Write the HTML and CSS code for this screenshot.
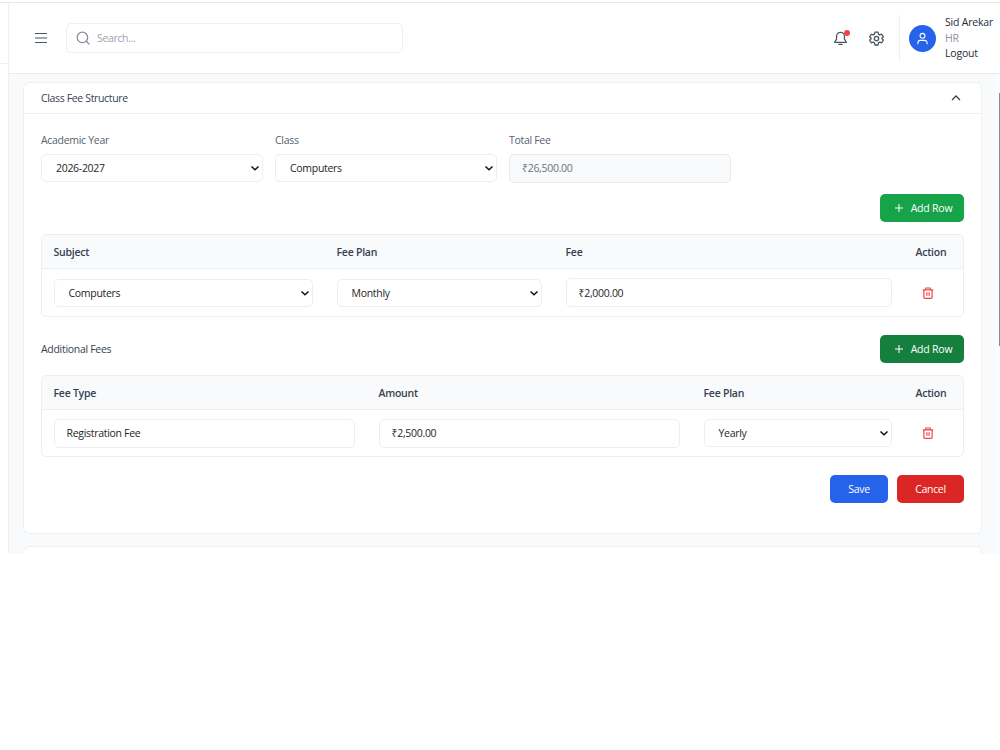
FILE: index.html
```html
<!DOCTYPE html>
<html lang="en">
<head>
  <meta charset="UTF-8">
  <title>Class Fee Structure</title>
  <link rel="stylesheet" href="styles.css">
</head>
<body>
  <div class="app">
    <aside class="sidebar">
      <div class="sidebar-logo"></div>
    </aside>

    <div class="main">
      <header class="topbar">
        <button class="icon-btn menu-btn" aria-label="Menu">
          <svg viewBox="0 0 14 14" fill="none" stroke="currentColor" stroke-width="1.2">
            <path d="M1 2.500h12M1 7h12M1 11.500h12"/>
          </svg>
        </button>
        <div class="search">
          <svg viewBox="0 0 24 24" fill="none" stroke="currentColor" stroke-width="2.200" stroke-linecap="round">
            <circle cx="11" cy="11" r="9"/>
            <path d="M17.700 17.700L22.500 22.500"/>
          </svg>
          <span>Search...</span>
        </div>
        <div class="topbar-right">
          <button class="icon-btn bell" aria-label="Notifications">
            <svg viewBox="0 0 24 24" fill="none" stroke="currentColor" stroke-width="2" stroke-linecap="round" stroke-linejoin="round">
              <path d="M12 2a6.300 6.300 0 0 0-6.300 6.300v4.700L2.500 18h19l-3.200-5V8.300A6.300 6.300 0 0 0 12 2z"/>
              <path d="M9.500 21.500h5"/>
            </svg>
            <i class="dot"></i>
          </button>
          <button class="icon-btn gear" aria-label="Settings">
            <svg viewBox="1 1 22 22" fill="none" stroke="currentColor" stroke-width="1.900" stroke-linejoin="round">
              <path d="M9.700 2.500h4.600l.7 3.100 1.700 1 3-.9 2.300 4-2.300 2.100v.4l2.300 2.100-2.300 4-3-.9-1.700 1-.7 3.100H9.700L9 18.400l-1.700-1-3 .9-2.300-4 2.300-2.100v-.4L2 9.700l2.300-4 3 .9 1.700-1z"/>
              <circle cx="12" cy="12" r="3.200"/>
            </svg>
          </button>
          <div class="user">
            <div class="avatar">
              <svg viewBox="0 0 24 24" fill="none" stroke="currentColor" stroke-width="2" stroke-linecap="round" stroke-linejoin="round">
                <circle cx="12" cy="7" r="4.500"/>
                <path d="M3.500 21.500v-1.500a4.500 4.500 0 0 1 4.500-4.500h8a4.500 4.500 0 0 1 4.500 4.500v1.500"/>
              </svg>
            </div>
            <div class="user-info">
              <div>Sid Arekar</div>
              <div class="role">HR</div>
              <div>Logout</div>
            </div>
          </div>
        </div>
      </header>

      <div class="content">
        <section class="card">
          <div class="card-header">
            <span>Class Fee Structure</span>
            <svg viewBox="0 0 12 12" fill="none" stroke="currentColor" stroke-width="1.300">
              <path d="M2 8l4-4 4 4"/>
            </svg>
          </div>

          <div class="card-body">
            <div class="fields">
              <label class="field">
                <span>Academic Year</span>
                <div class="select"><span>2026-2027</span><svg viewBox="0 0 10 8"><path d="M1.500 2.500L5 5.800l3.500-3.300"/></svg></div>
              </label>
              <label class="field">
                <span>Class</span>
                <div class="select"><span>Computers</span><svg viewBox="0 0 10 8"><path d="M1.500 2.500L5 5.800l3.500-3.300"/></svg></div>
              </label>
              <label class="field">
                <span>Total Fee</span>
                <div class="input disabled">₹26,500.00</div>
              </label>
            </div>

            <div class="toolbar">
              <button class="btn btn-add">
                <svg viewBox="0 0 10 10" fill="none" stroke="currentColor"><path d="M5 1v8M1 5h8"/></svg>
                <span>Add Row</span>
              </button>
            </div>

            <div class="table subjects">
              <div class="row head">
                <div>Subject</div>
                <div>Fee Plan</div>
                <div>Fee</div>
                <div>Action</div>
              </div>
              <div class="row">
                <div class="select"><span>Computers</span><svg viewBox="0 0 10 8"><path d="M1.500 2.500L5 5.800l3.500-3.300"/></svg></div>
                <div class="select"><span>Monthly</span><svg viewBox="0 0 10 8"><path d="M1.500 2.500L5 5.800l3.500-3.300"/></svg></div>
                <div class="input">₹2,000.00</div>
                <button class="icon-btn delete" aria-label="Delete">
                  <svg viewBox="0 0 12 12" fill="none" stroke="currentColor" stroke-width="1.200">
                    <path d="M.8 2.800h10.400M3.800 2.800V1h4.400v1.800M1.900 2.800v7.400q0 1.100 1.100 1.100h6q1.100 0 1.100-1.100V2.800M4.900 5.200v3.600M7.100 5.200v3.600"/>
                  </svg>
                </button>
              </div>
            </div>

            <div class="toolbar additional">
              <span>Additional Fees</span>
              <button class="btn btn-add active">
                <svg viewBox="0 0 10 10" fill="none" stroke="currentColor"><path d="M5 1v8M1 5h8"/></svg>
                <span>Add Row</span>
              </button>
            </div>

            <div class="table extras">
              <div class="row head">
                <div>Fee Type</div>
                <div>Amount</div>
                <div>Fee Plan</div>
                <div>Action</div>
              </div>
              <div class="row">
                <div class="input">Registration Fee</div>
                <div class="input">₹2,500.00</div>
                <div class="select"><span>Yearly</span><svg viewBox="0 0 10 8"><path d="M1.500 2.500L5 5.800l3.500-3.300"/></svg></div>
                <button class="icon-btn delete" aria-label="Delete">
                  <svg viewBox="0 0 12 12" fill="none" stroke="currentColor" stroke-width="1.200">
                    <path d="M.8 2.800h10.400M3.800 2.800V1h4.400v1.800M1.900 2.800v7.400q0 1.100 1.100 1.100h6q1.100 0 1.100-1.100V2.800M4.900 5.200v3.600M7.100 5.200v3.600"/>
                  </svg>
                </button>
              </div>
            </div>

            <div class="actions">
              <button class="btn btn-save">Save</button>
              <button class="btn btn-cancel">Cancel</button>
            </div>
          </div>
        </section>

        <section class="card next-card"></section>
        <div class="scrollbar"><div class="thumb"></div></div>
      </div>
    </div>
  </div>
</body>
</html>
```

FILE: styles.css
```css
* {
  box-sizing: border-box;
}
body {
  margin: 0;
  background: #fff;
  font-family: "Open Sans", "Noto Sans", sans-serif;
  font-size: 10.5px;
  letter-spacing: -0.3px;
  line-height: 16px;
  color: #374151;
}
button {
  font: inherit;
  letter-spacing: inherit;
  border: 0;
  padding: 0;
  background: none;
  cursor: pointer;
}
svg {
  display: block;
  flex: none;
}
.app {
  display: flex;
  height: 554px;
  padding-top: 2px;
  overflow: hidden;
}
.sidebar {
  width: 9px;
  border-top: 1px solid #e5e7eb;
  border-right: 1px solid #eef0f3;
}
.sidebar-logo {
  height: 61px;
  border-bottom: 1px solid #eef0f3;
}
.main {
  flex: 1;
  display: flex;
  flex-direction: column;
  min-width: 0;
}

/* top bar */
.topbar {
  flex: none;
  height: 72px;
  display: flex;
  align-items: center;
  border-top: 1px solid #e5e7eb;
  border-bottom: 1px solid #e9ebee;
  padding: 0 7px 0 25px;
}
.icon-btn {
  color: #4b5563;
}
.menu-btn svg {
  width: 14px;
  height: 14px;
}
.search {
  width: 337px;
  height: 30px;
  margin-left: 18px;
  padding: 0 10px 0 9px;
  display: flex;
  align-items: center;
  gap: 7px;
  border: 1px solid #eef0f3;
  border-radius: 5px;
  color: #9ca3af;
  letter-spacing: -0.35px;
}
.search svg {
  width: 14px;
  height: 14px;
  color: #858e9c;
}
.topbar-right {
  margin-left: auto;
  display: flex;
  align-items: center;
}
.bell {
  position: relative;
  margin-right: 21px;
}
.bell svg,
.gear svg {
  width: 15px;
  height: 15px;
}
.gear {
  margin-right: 15px;
}
.dot {
  position: absolute;
  top: -1px;
  right: -2px;
  width: 6px;
  height: 6px;
  border-radius: 50%;
  background: #ef4444;
}
.user {
  width: 94px;
  height: 47px;
  padding-left: 9px;
  display: flex;
  align-items: center;
  gap: 9px;
  border-left: 1px solid #eef0f3;
}
.avatar {
  flex: none;
  width: 27px;
  height: 27px;
  border-radius: 50%;
  background: #2563eb;
  color: #fff;
  display: flex;
  align-items: center;
  justify-content: center;
}
.avatar svg {
  width: 13px;
  height: 13px;
}
.user-info {
  padding-top: 1px;
  line-height: 15.4px;
  letter-spacing: -0.2px;
  color: #262d38;
  white-space: nowrap;
}
.user-info .role {
  color: #8b93a0;
}

/* content */
.content {
  flex: 1;
  position: relative;
  padding: 8px 18px 0 14px;
  background: #f9fafb;
  overflow: hidden;
}
.card {
  height: 452px;
  background: #fff;
  border: 1px solid #eef0f3;
  border-radius: 6px;
}
.next-card {
  margin-top: 12px;
  height: 100px;
}
.card-header {
  height: 31px;
  padding: 0 19px 0 17px;
  display: flex;
  align-items: center;
  justify-content: space-between;
  border-bottom: 1px solid #eef0f3;
  letter-spacing: -0.35px;
}
.card-header svg {
  width: 12px;
  height: 12px;
}
.card-body {
  padding: 18px 17px 0;
}
.fields {
  display: grid;
  grid-template-columns: 222px 222px 222px;
  gap: 12px;
}
.field > span {
  display: block;
  height: 22px;
  color: #586170;
}
.select,
.input {
  height: 29px;
  display: flex;
  align-items: center;
  border: 1px solid #eceef1;
  border-radius: 5px;
  padding: 0 12px;
  background: #fff;
  color: #262626;
}
.select {
  height: 28px;
  justify-content: space-between;
  padding: 0 2px 0 14px;
}
.select svg {
  width: 10px;
  height: 8px;
  fill: none;
  stroke: #111;
  stroke-width: 1.5;
}
.field .input {
  padding-bottom: 1px;
}
.disabled {
  background: #f9fafb;
  color: #6b7280;
  border-color: #e8ebee;
}
.toolbar {
  display: flex;
  align-items: center;
  justify-content: flex-end;
  margin-top: 11px;
}
.additional {
  justify-content: space-between;
  margin-top: 18px;
}
.btn {
  height: 28px;
  display: flex;
  align-items: center;
  justify-content: center;
  border-radius: 5px;
  color: #fff;
}
.btn-add {
  width: 84px;
  gap: 7px;
  padding-left: 2px;
  letter-spacing: -0.2px;
  background: #16a34a;
}
.btn-add svg {
  width: 10px;
  height: 10px;
}
.btn-add.active {
  background: #15803d;
}

/* tables */
.table {
  margin-top: 12px;
  height: 83px;
  border: 1px solid #eceef1;
  border-radius: 5px;
  overflow: hidden;
}
.extras {
  height: 82px;
}
.row {
  display: grid;
  column-gap: 24px;
  align-items: center;
  height: 47px;
  padding: 0 11.5px;
}
.subjects .row {
  grid-template-columns: 259px 205px 326px 1fr;
}
.extras .row {
  grid-template-columns: 301px 301px 188px 1fr;
}
.row.head {
  height: 34px;
  background: #f9fafb;
  border-bottom: 1px solid #eceef1;
  font-weight: 600;
  letter-spacing: -0.25px;
}
.extras .row:not(.head) {
  height: 46px;
}
.delete {
  justify-self: start;
  margin-left: 6px;
  color: #ef4444;
}
.delete svg {
  width: 12px;
  height: 12px;
}
.actions {
  display: flex;
  justify-content: flex-end;
  gap: 9px;
  margin-top: 18px;
}
.btn-save {
  width: 58px;
  background: #2563eb;
}
.btn-cancel {
  width: 67px;
  background: #dc2626;
}

/* page scrollbar, sits over the right edge */
.scrollbar {
  position: absolute;
  top: 0;
  right: 0;
  bottom: 0;
  width: 5px;
  padding: 19px 0 0 4px;
  background: #fcfcfc;
}
.thumb {
  height: 253px;
  background: #8b8b8b;
}
```
